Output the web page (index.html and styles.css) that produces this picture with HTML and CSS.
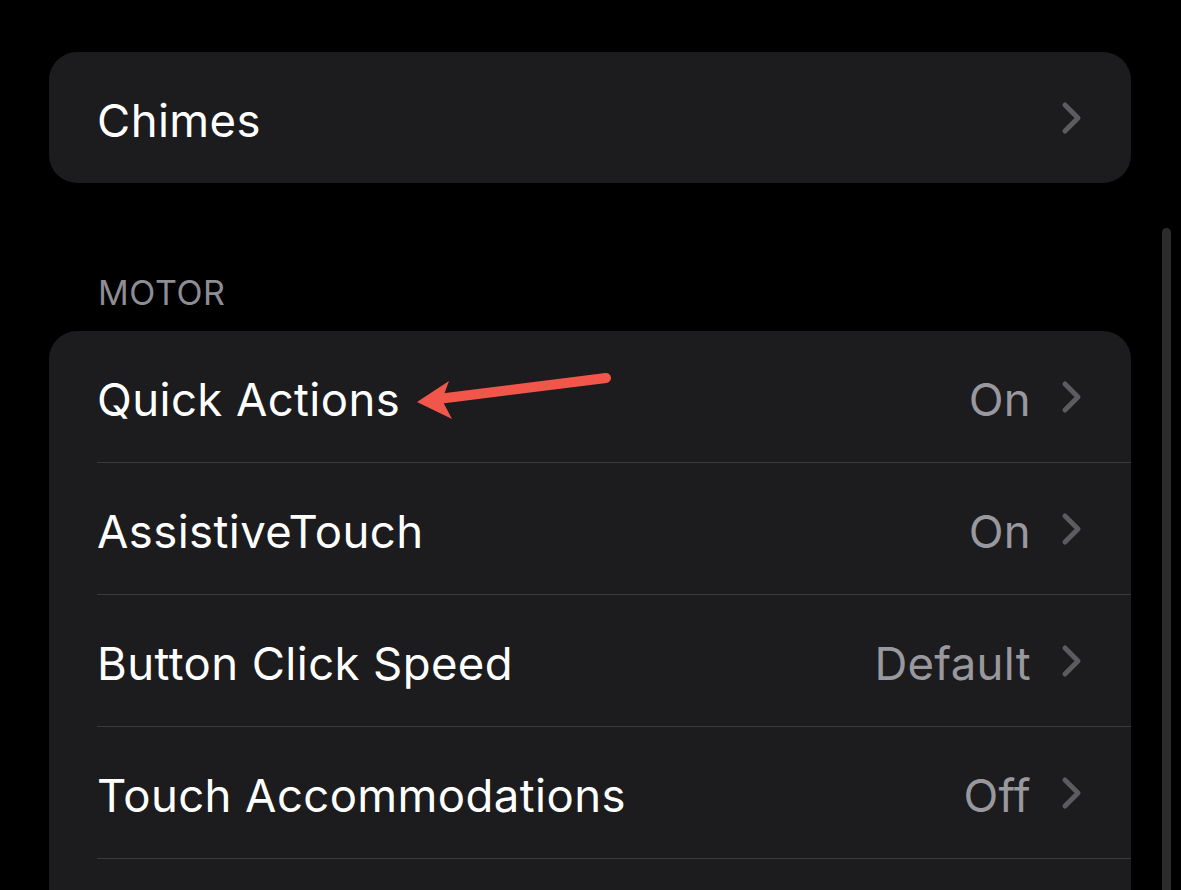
FILE: index.html
```html
<!DOCTYPE html>
<html lang="en">
<head>
<meta charset="UTF-8">
<meta name="viewport" content="width=device-width, initial-scale=1">
<title>Accessibility</title>
<link rel="stylesheet" href="styles.css">
</head>
<body>

<div class="page">
  <!-- Hearing group tail -->
  <div class="group">
    <div class="row">
      <span class="label">Chimes</span>
      <span class="chevron">
        <svg width="22" height="34" viewBox="0 0 22 34"><path d="M4 4 L17 17 L4 30" fill="none" stroke="#5b5b60" stroke-width="5" stroke-linecap="round" stroke-linejoin="round"/></svg>
      </span>
    </div>
  </div>

  <div class="section-title">MOTOR</div>

  <div class="group">
    <div class="row">
      <span class="label">Quick Actions</span>
      <span class="value">On</span>
      <span class="chevron">
        <svg width="22" height="34" viewBox="0 0 22 34"><path d="M4 4 L17 17 L4 30" fill="none" stroke="#5b5b60" stroke-width="5" stroke-linecap="round" stroke-linejoin="round"/></svg>
      </span>
    </div>
    <div class="row">
      <span class="label">AssistiveTouch</span>
      <span class="value">On</span>
      <span class="chevron">
        <svg width="22" height="34" viewBox="0 0 22 34"><path d="M4 4 L17 17 L4 30" fill="none" stroke="#5b5b60" stroke-width="5" stroke-linecap="round" stroke-linejoin="round"/></svg>
      </span>
    </div>
    <div class="row">
      <span class="label">Button Click Speed</span>
      <span class="value">Default</span>
      <span class="chevron">
        <svg width="22" height="34" viewBox="0 0 22 34"><path d="M4 4 L17 17 L4 30" fill="none" stroke="#5b5b60" stroke-width="5" stroke-linecap="round" stroke-linejoin="round"/></svg>
      </span>
    </div>
    <div class="row">
      <span class="label">Touch Accommodations</span>
      <span class="value">Off</span>
      <span class="chevron">
        <svg width="22" height="34" viewBox="0 0 22 34"><path d="M4 4 L17 17 L4 30" fill="none" stroke="#5b5b60" stroke-width="5" stroke-linecap="round" stroke-linejoin="round"/></svg>
      </span>
    </div>
    <div class="row"></div>
  </div>

  <!-- annotation arrow -->
  <svg class="arrow" width="220" height="60" viewBox="0 0 220 60">
    <line x1="198" y1="14" x2="30" y2="35" stroke="#f2564b" stroke-width="10" stroke-linecap="round"/>
    <path d="M9 38 L41 17 L34 36 L44 55 Z" fill="#f2564b"/>
  </svg>

  <div class="scrollbar"></div>
</div>

</body>
</html>
```

FILE: styles.css
```css
body {
  margin: 0;
  background: #000000;
  font-family: Inter, "Noto Sans", sans-serif;
  color: #ffffff;
}

.page {
  position: relative;
  width: 1181px;
  height: 890px;
  overflow: hidden;
  padding: 52px 0 0 49px;
  box-sizing: border-box;
}

.group {
  width: 1082px;
  background: #1c1c1e;
  border-radius: 28px;
  overflow: hidden;
}

.row {
  display: flex;
  align-items: center;
  height: 131px;
  margin-left: 48px;
  padding-right: 48px;
  border-bottom: 1px solid #3a3a3d;
  font-size: 45.5px;
  font-weight: 400;
}

.row:last-child {
  border-bottom: none;
}

.group:first-child .row {
  border-bottom: none;
}

.label,
.value {
  padding-top: 5px;
}

.label {
  flex: 1;
  letter-spacing: 0.4px;
}

.value {
  color: #98989e;
  margin-right: 30px;
  letter-spacing: 0.3px;
}

.chevron {
  display: flex;
  width: 22px;
}

.section-title {
  font-size: 34px;
  color: #8d8d93;
  letter-spacing: 0.6px;
  padding: 89px 0 0 49px;
  height: 59px;
}

.arrow {
  position: absolute;
  left: 408px;
  top: 364px;
}

.scrollbar {
  position: absolute;
  left: 1162px;
  top: 228px;
  width: 9px;
  height: 680px;
  background: #2c2c2e;
  border-radius: 5px;
}
```
